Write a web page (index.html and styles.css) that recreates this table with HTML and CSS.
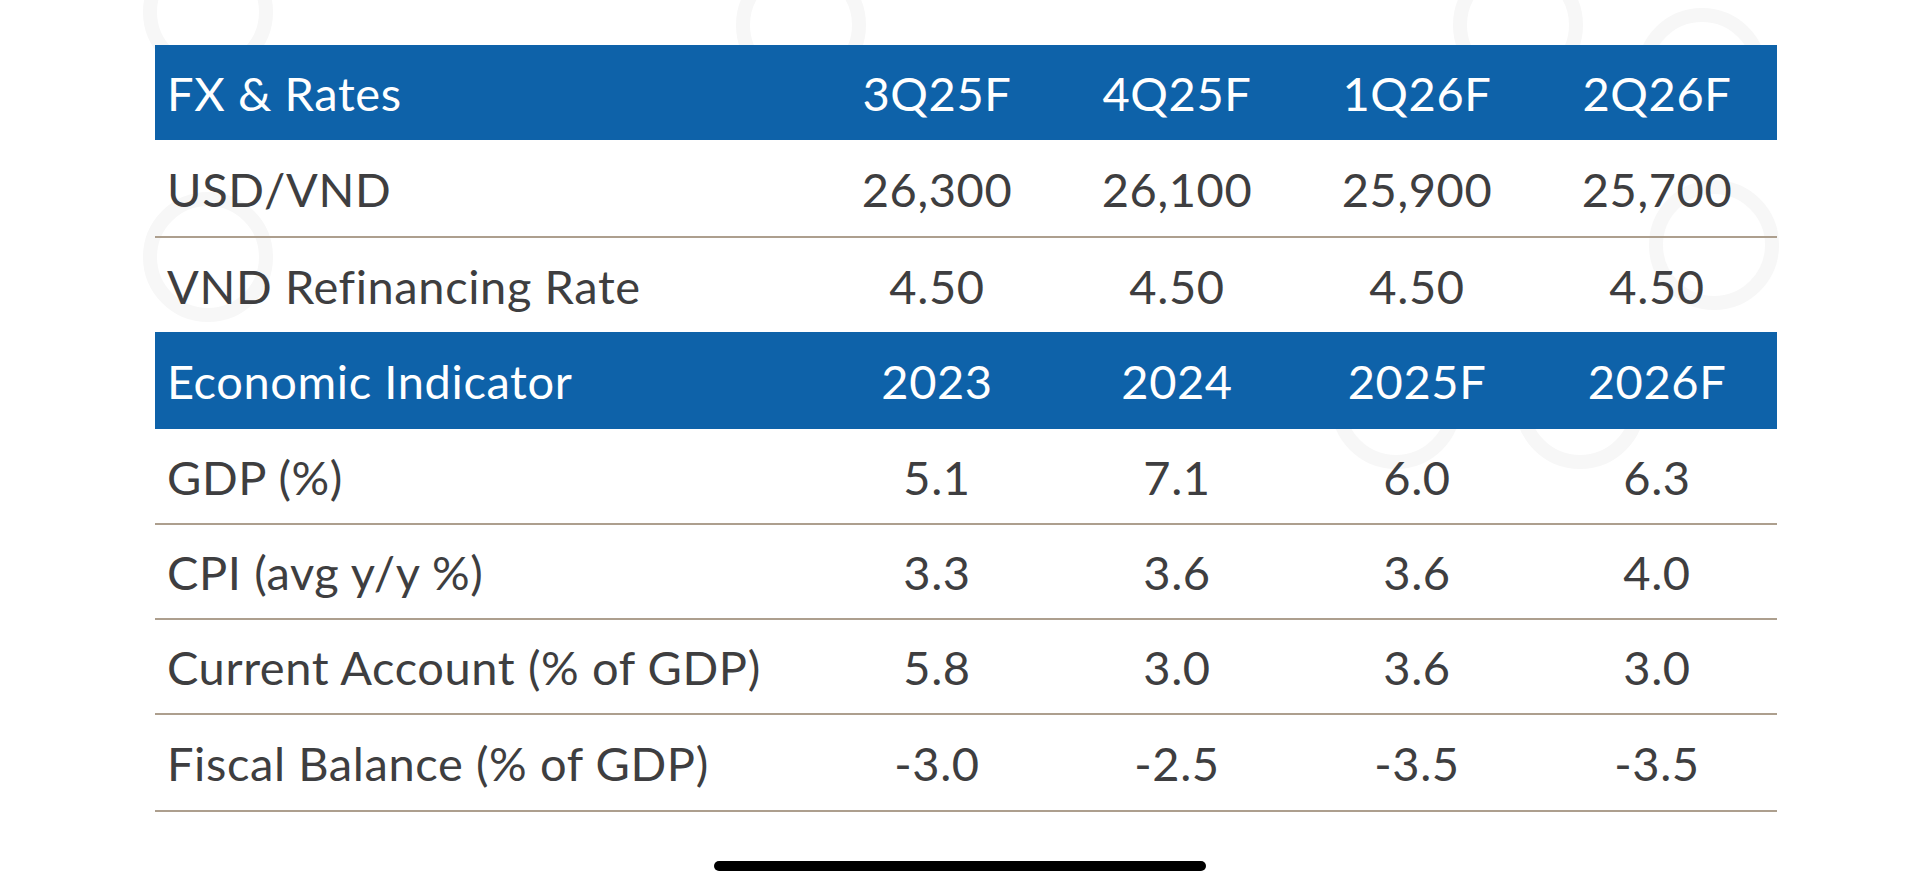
FILE: index.html
```html
<!DOCTYPE html>
<html lang="en">
<head>
<meta charset="utf-8">
<title>FX & Rates</title>
<link rel="stylesheet" href="styles.css">
</head>
<body>
<div class="page">
  <div class="watermark" aria-hidden="true">
    <span class="ring r1"></span>
    <span class="ring r2"></span>
    <span class="ring r3"></span>
    <span class="ring r4"></span>
    <span class="ring r5"></span>
    <span class="ring r6"></span>
    <span class="ring r7"></span>
    <span class="ring r8"></span>
  </div>
  <table class="fx">
    <colgroup>
      <col class="c-label">
      <col class="c-val">
      <col class="c-val">
      <col class="c-val">
      <col class="c-val">
    </colgroup>
    <tr class="head head1">
      <th>FX &amp; Rates</th><th>3Q25F</th><th>4Q25F</th><th>1Q26F</th><th>2Q26F</th>
    </tr>
    <tr class="row lined first">
      <td>USD/VND</td><td>26,300</td><td>26,100</td><td>25,900</td><td>25,700</td>
    </tr>
    <tr class="row last">
      <td>VND Refinancing Rate</td><td>4.50</td><td>4.50</td><td>4.50</td><td>4.50</td>
    </tr>
    <tr class="head head2">
      <th>Economic Indicator</th><th>2023</th><th>2024</th><th>2025F</th><th>2026F</th>
    </tr>
    <tr class="row lined">
      <td>GDP (%)</td><td>5.1</td><td>7.1</td><td>6.0</td><td>6.3</td>
    </tr>
    <tr class="row lined">
      <td>CPI (avg y/y %)</td><td>3.3</td><td>3.6</td><td>3.6</td><td>4.0</td>
    </tr>
    <tr class="row lined">
      <td>Current Account (% of GDP)</td><td>5.8</td><td>3.0</td><td>3.6</td><td>3.0</td>
    </tr>
    <tr class="row lined final">
      <td>Fiscal Balance (% of GDP)</td><td>-3.0</td><td>-2.5</td><td>-3.5</td><td>-3.5</td>
    </tr>
  </table>
  <div class="home-bar"></div>
</div>
</body>
</html>
```

FILE: styles.css
```css
html, body {
  margin: 0;
  padding: 0;
  background: #ffffff;
}

.page {
  position: relative;
  width: 1920px;
  height: 886px;
  overflow: hidden;
  padding-top: 45px;
  box-sizing: border-box;
  font-family: Lato, "Open Sans", "Liberation Sans", sans-serif;
}

.watermark {
  position: absolute;
  inset: 0;
  z-index: 0;
  pointer-events: none;
}

.ring {
  position: absolute;
  width: 130px;
  height: 130px;
  border: 14px solid #f7f7f7;
  border-radius: 50%;
  box-sizing: border-box;
}
.r1 { left: 143px; top: -53px; }
.r2 { left: 736px; top: -40px; }
.r3 { left: 1453px; top: -40px; }
.r4 { left: 1637px; top: 8px; }
.r5 { left: 1649px; top: 180px; }
.r6 { left: 1331px; top: 339px; }
.r7 { left: 1515px; top: 339px; }
.r8 { left: 143px; top: 192px; }

.fx {
  position: relative;
  z-index: 1;
  margin-left: 155px;
  width: 1622px;
  border-collapse: collapse;
  table-layout: fixed;
}

.c-label { width: 662px; }
.c-val { width: 240px; }

.fx th,
.fx td {
  padding: 0;
  font-size: 47px;
  font-weight: 400;
  letter-spacing: 0.6px;
  line-height: 1;
  text-align: center;
  white-space: nowrap;
}

.fx th:first-child,
.fx td:first-child {
  text-align: left;
  padding-left: 12px;
}

.head th {
  background: #0e62a9;
  color: #ffffff;
  padding-top: 1px;
  box-sizing: border-box;
}

.head1 th { height: 95px; }
.head2 th { height: 97px; }

.row td {
  color: #3e3e40;
  height: 95px;
  padding-top: 2px;
  box-sizing: border-box;
}

.row.first td { height: 97px; }
.row.last td { height: 95px; }
.row.final td { height: 97px; }

.row.lined td {
  border-bottom: 2px solid #ad9f8e;
}

.home-bar {
  width: 492px;
  height: 10px;
  margin: 49px auto 0;
  border-radius: 5px;
  background: #000000;
  position: relative;
  z-index: 1;
}
```
